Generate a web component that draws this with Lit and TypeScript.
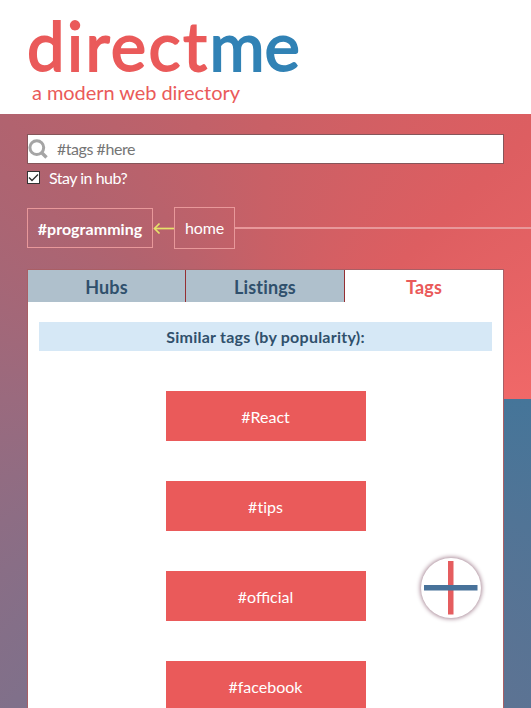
import { LitElement, html, css } from "lit";
import { customElement, state } from "lit/decorators.js";
import { classMap } from "lit/directives/class-map.js";

@customElement("app-root")
export class AppRoot extends LitElement {
  @state() private active = "Tags";
  private tabs = ["Hubs", "Listings", "Tags"];
  private tags = ["#React", "#tips", "#official", "#facebook"];

  static styles = css`
    :host {
      display: flex;
      flex-direction: column;
      height: 708px;
      overflow: hidden;
      position: relative;
      font-family: Lato, "Liberation Sans", sans-serif;
      font-size: 16px;
      color: #fff;
    }
    * { box-sizing: border-box; }
    header { height: 114px; flex: none; background: #fff; color: #ea5a5a; padding: 9px 0 0 27px; }
    h1 {
      margin: 0;
      font-size: 67px;
      line-height: 72px;
      font-weight: 400;
      letter-spacing: 2.4px;
      white-space: nowrap;
      -webkit-text-stroke: 1.8px currentColor;
    }
    .me { color: #3182b5; letter-spacing: 0; }
    .tagline { margin: 0 0 0 5px; font-size: 20px; line-height: 22px; letter-spacing: -0.06px; }
    main {
      flex: 1;
      min-height: 0;
      padding: 20px 27px 0;
      display: flex;
      flex-direction: column;
      background: conic-gradient(from 90deg at 265px 285px,
        #457599, #80708a 36%, #9a6a7e 50%, #b1636f 63%, #c96066 75%, #dd5e61 87.5%, #f06868);
    }
    .search {
      flex: none;
      display: flex;
      align-items: center;
      height: 30px;
      border: 1px solid #85565a;
      background: #fff;
      color: #757575;
      gap: 9px;
    }
    .search span { letter-spacing: -0.45px; padding-bottom: 2px; }
    .search svg { width: 20px; height: 22px; }
    .stay { flex: none; display: flex; align-items: center; height: 28px; gap: 9px; padding-bottom: 2px; }
    .stay span { letter-spacing: -0.5px; }
    .stay svg { width: 13px; height: 13px; }
    .crumbs { flex: none; display: flex; align-items: center; height: 42px; margin: 15px -27px 0 0; }
    .crumb { border: 1px solid #e8989a; display: flex; align-items: center; justify-content: center; }
    .current { width: 126px; height: 40px; font-weight: 700; padding-top: 1px; letter-spacing: 0.05px; }
    .home { width: 61px; height: 42px; padding-bottom: 1px; letter-spacing: -0.2px; }
    .arrow { width: 21px; height: 14px; }
    .line { flex: 1; height: 2px; background: #e8989a; }
    .panel {
      flex: none;
      width: 477px;
      height: 500px;
      margin-top: 20px;
      border: 1px solid #a95f65;
      background: #fff;
      display: flex;
      flex-direction: column;
      align-items: center;
    }
    .tabs { display: grid; grid-template-columns: 157px 159px 159px; height: 32px; width: 100%; flex: none; }
    .tab {
      background: #afc0cc;
      color: #30506c;
      font-size: 18px;
      font-weight: 700;
      letter-spacing: 0.15px;
      display: flex;
      align-items: center;
      justify-content: center;
      padding-top: 2px;
    }
    .tab + .tab { border-left: 1px solid #952f33; }
    .tab.active { background: #fff; color: #ea5a5a; }
    h2 {
      margin: 20px 0 0;
      width: 453px;
      height: 29px;
      line-height: 30px;
      flex: none;
      background: #d6e8f6;
      color: #30506c;
      font-size: 16px;
      letter-spacing: 0.24px;
      text-align: center;
    }
    .list { display: flex; flex-direction: column; gap: 40px; margin-top: 40px; }
    .tag {
      width: 200px;
      height: 50px;
      background: #ea5a5a;
      display: flex;
      align-items: center;
      justify-content: center;
      padding-top: 1px;
    }
    .tag.plain { font-variant-ligatures: none; }
    .add {
      position: absolute;
      left: 421px;
      top: 558px;
      width: 60px;
      height: 60px;
      border-radius: 50%;
      background: #fff;
      box-shadow: 0 0 4px 1px #a98a98;
    }
    .add svg { display: block; width: 60px; height: 60px; }
  `;

  render() {
    return html`
      <header>
        <h1>direct<span class="me">me</span></h1>
        <p class="tagline">a modern web directory</p>
      </header>
      <main>
        <div class="search">
          <svg viewBox="0 0 20 22" fill="none" stroke="#a5a5a5">
            <circle cx="8.8" cy="9.6" r="6.9" stroke-width="3" />
            <path d="M13.5 14.5L18.5 19.5" stroke-width="3.4" />
          </svg>
          <span>#tags #here</span>
        </div>
        <div class="stay">
          <svg viewBox="0 0 13 13">
            <rect x=".5" y=".5" width="12" height="12" fill="#fff" stroke="#333" />
            <path d="M2 6.5L5 9.5L11 3.5" fill="none" stroke="#333" stroke-width="1.4" />
          </svg>
          <span>Stay in hub?</span>
        </div>
        <nav class="crumbs">
          <span class="crumb current">#programming</span>
          <svg class="arrow" viewBox="0 0 21 14" fill="none" stroke="#e6e36a">
            <path d="M2 7.5H21" stroke-width="1.7" />
            <path d="M6.5 2.5L1.5 7.5L6.5 12.5" stroke-width="1.7" />
          </svg>
          <span class="crumb home">home</span>
          <span class="line"></span>
        </nav>
        <section class="panel">
          <div class="tabs">
            ${this.tabs.map(
              (t) => html`<div
                class=${classMap({ tab: true, active: t === this.active })}
                @click=${() => (this.active = t)}
              >${t}</div>`
            )}
          </div>
          <h2>Similar tags (by popularity):</h2>
          <div class="list">
            ${this.tags.map(
              (t) => html`<div class=${classMap({ tag: true, plain: !t.includes("ffi") })}>${t}</div>`
            )}
          </div>
        </section>
      </main>
      <div class="add">
        <svg viewBox="0 0 60 60">
          <rect x="27" y="3" width="5.5" height="53.5" fill="#e55d5f" />
          <rect x="3" y="27" width="53.5" height="5.5" fill="#48729a" />
        </svg>
      </div>
    `;
  }
}
